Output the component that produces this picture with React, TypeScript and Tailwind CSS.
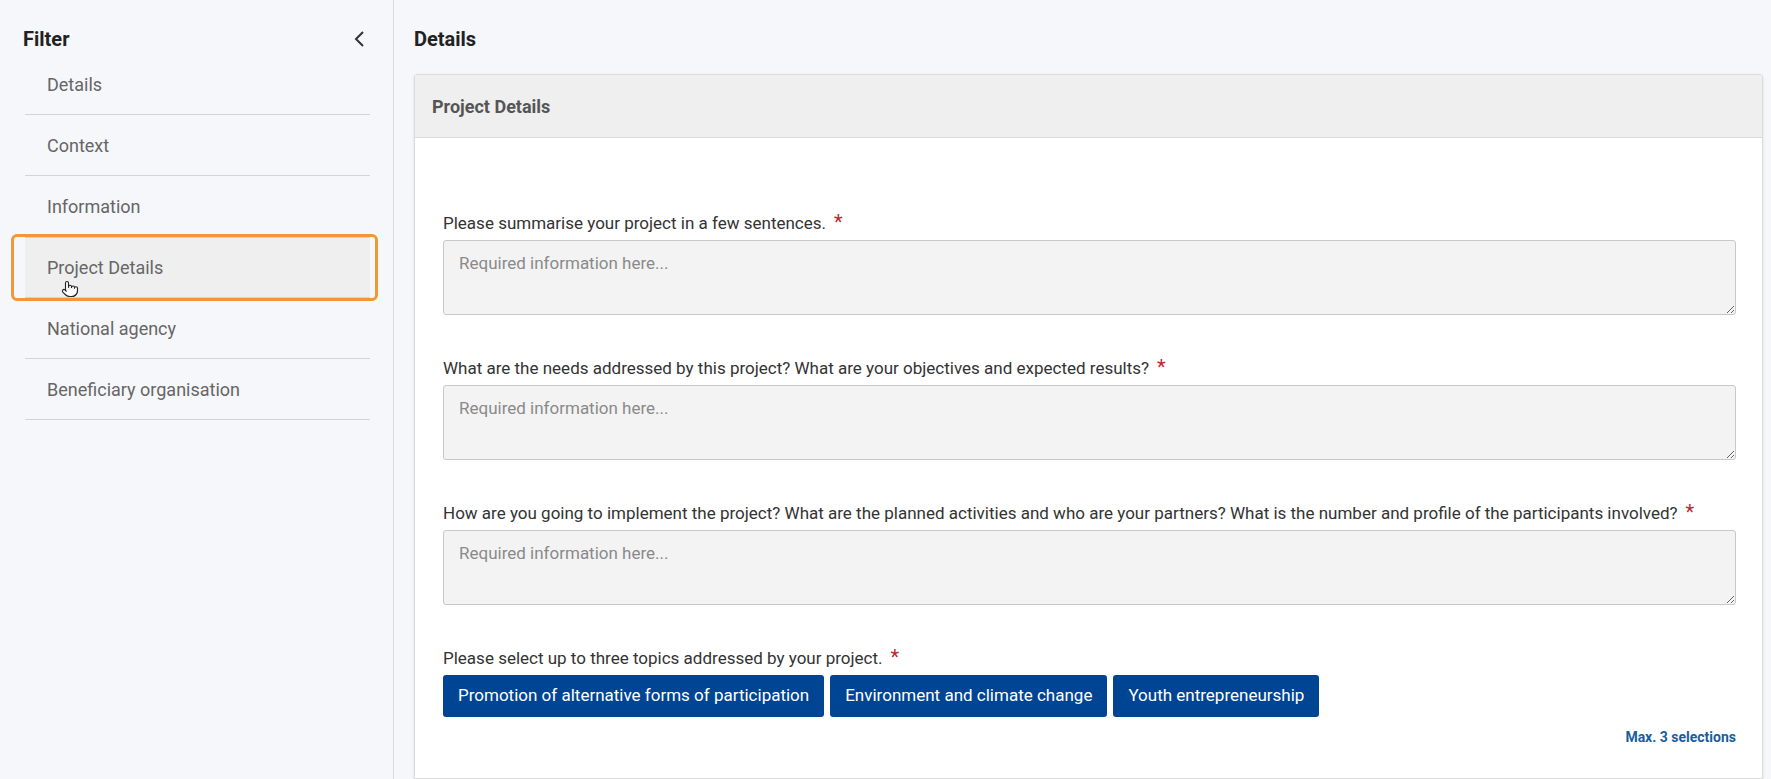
import React from "react";
import { Pointer } from "lucide-react";

const items = ["Details", "Context", "Information", "Project Details", "National agency", "Beneficiary organisation"];

function Field({ label }: { label: React.ReactNode }) {
  return (
    <div className="mb-[42px]">
      <div className="text-[17px] leading-[23px] text-[#333] mb-[5px]">{label}</div>
      <textarea
        placeholder="Required information here..."
        className="block w-full h-[75px] bg-[#f3f3f3] border border-[#c8c8c8] rounded-[3px] px-[15px] py-[10px] text-[17px] placeholder-[#8a8a8a] resize-y"
      />
    </div>
  );
}

const Star = () => <span className="inline-block leading-none text-[#c0262d] text-[20px] ml-[8px] align-top">*</span>;

export default function App() {
  return (
    <div className="w-[1771px] h-[779px] overflow-hidden bg-[#f6f7fa] flex font-[Roboto,sans-serif]">
      <aside className="w-[394px] shrink-0 border-r border-[#dcdcdc] pl-[23px] pr-[23px] pt-[24px]">
        <div className="flex items-center justify-between">
          <h2 className="text-[20px] font-bold text-[#222]">Filter</h2>
          <svg width="16" height="22" viewBox="0 0 16 22" className="mr-[2px]"><path d="M11 4 L4 11 L11 18" fill="none" stroke="#333" strokeWidth="2"/></svg>
        </div>
        <div className="ml-[2px]">
          {items.map((t) => {
            const active = t === "Project Details";
            return (
              <div key={t} className="relative">
                {active && <div className="absolute -left-[14px] -right-[8px] -top-[3px] -bottom-[3px] border-[3px] border-[#f0973a] rounded-[6px]" />}
                <div className={`h-[61px] flex items-center pl-[22px] border-b border-[#d4d4d4] text-[18px] text-[#666] ${active ? "bg-[#efefef] border-t" : ""}`}>
                  {t}
                </div>
                {active && <Pointer className="absolute left-[36px] top-[42px] w-[18px] h-[20px] text-[#222] fill-white" strokeWidth={1.5} />}
              </div>
            );
          })}
        </div>
      </aside>
      <main className="flex-1 pl-[20px] pr-[8px] pt-[24px]">
        <h1 className="text-[20px] font-bold text-[#222] mb-[20px]">Details</h1>
        <div className="bg-white border border-[#dcdcdc] shadow-sm rounded-t-[3px]">
          <div className="h-[63px] bg-[#efefef] border-b border-[#dadada] flex items-center px-[17px] text-[18px] font-bold text-[#555]">Project Details</div>
          <div className="pl-[28px] pr-[26px] pt-[74px]">
            <Field label={<>Please summarise your project in a few sentences.<Star /></>} />
            <Field label={<>What are the needs addressed by this project? What are your objectives and expected results?<Star /></>} />
            <Field label={<>How are you going to implement the project? What are the planned activities and who are your partners? What is the number and profile of the participants involved?<Star /></>} />
            <div className="text-[17px] leading-[23px] text-[#333] mb-[5px]">Please select up to three topics addressed by your project.<Star /></div>
            <div className="flex gap-[6px]">
              {["Promotion of alternative forms of participation", "Environment and climate change", "Youth entrepreneurship"].map((b) => (
                <button key={b} className="h-[42px] px-[15px] bg-[#004494] text-white text-[17px] rounded-[3px]">{b}</button>
              ))}
            </div>
            <div className="text-right text-[14px] font-bold text-[#1a5d9e] mt-[10px] pb-[30px]">Max. 3 selections</div>
          </div>
        </div>
      </main>
    </div>
  );
}
